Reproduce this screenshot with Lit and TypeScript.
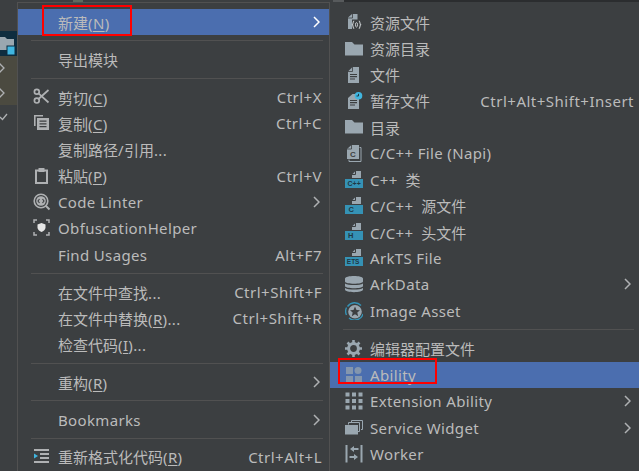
import { LitElement, html, css, svg } from "lit";
import { customElement } from "lit/decorators.js";

const G = "#9aa7b0";
const B = "#40b6e0";
const D = "#3c3f41";
const head = (body: any, bar = "#3592b5") => svg`<path fill="${G}" d="M7 7V3.500L10.500 0H16v7z"/><path stroke="${D}" d="M7 3.500h3.500V0" fill="none"/><rect y="8" width="18" height="9" fill="${bar}"/>${body}`;
const lbl = (x: number, s: string, fs = 7.5) => svg`<text x="${x}" y="15.300" font-size="${fs}" font-weight="700" font-family="Liberation Sans" fill="#1f3844">${s}</text>`;
const I: Record<string, any> = {
  cut: svg`<g fill="none" stroke="#afb1b3" stroke-width="1.700"><circle cx="3.800" cy="3.800" r="2.400"/><circle cx="3.800" cy="12.600" r="2.400"/><path d="M5.500 5.300 15.500 14.500M5.500 11 15.500 2"/></g>`,
  copy: svg`<path fill="#afb1b3" d="M1 1h9v1.600H2.600V12H1z"/><path fill="#afb1b3" fill-rule="evenodd" d="M4 4h12v12H4zm2.500 2.500v1.300h7V6.500zm0 2.800v1.300h7V9.300zm0 2.700v1.300h7V12z"/>`,
  paste: svg`<path fill="none" stroke="#afb1b3" stroke-width="2" d="M3 3.500h11V16H3z"/><path fill="#afb1b3" d="M5.500 1h6v4h-6z"/>`,
  linter: svg`<circle cx="8" cy="8" r="6.800" fill="none" stroke="#afb1b3" stroke-width="1.600"/><path d="m12.500 12.500 4 4" stroke="#afb1b3" stroke-width="2"/><circle cx="8" cy="8" r="4.800" fill="#afb1b3"/><path d="M6.500 6 5 8l1.500 2M9.500 6 11 8l-1.500 2" fill="none" stroke="${D}" stroke-width="1.100"/>`,
  shield: svg`<path fill="none" stroke="#afb1b3" stroke-width="1.500" d="M1 4V1h3M13 1h3v3M16 13v3h-3M4 16H1v-3"/><path fill="#e6e6e6" d="M8.500 4 12.500 5.500v3c0 2-2 3.500-4 4.500-2-1-4-2.500-4-4.500v-3z"/>`,
  fmt: svg`<path fill="#afb1b3" d="M1 1h15v2H1zM7 5h9v2H7zM7 9h9v2H7zM1 13h15v2H1z"/><path fill="${B}" d="M1 5.500 5 8l-4 2.500z"/>`,
  res: svg`<path fill="${G}" d="M3 9.500V4.500L7 1h5.500v5.500H7V16H3z"/><path stroke="${D}" fill="none" stroke-width=".8" d="M3 5h4.500V1"/><path fill="none" stroke="#c4c8ca" stroke-width="1.100" d="M9.200 8c-1.500 0-.8 3-1.800 3.800 1 .7.300 3.700 1.800 3.700M13.800 8c1.500 0 .8 3 1.800 3.800-1 .7-.3 3.700-1.800 3.700"/><ellipse cx="11.500" cy="11.800" rx="1" ry="2.300" fill="none" stroke="#c4c8ca"/>`,
  folder: svg`<path fill="${G}" d="M0 2h7l2.500 2.500H18V15.500H0z"/>`,
  file: svg`<path fill="${G}" d="M3 5.500 7.500 1H14v16H3z"/><path stroke="${D}" fill="none" stroke-width=".8" d="M3 5.500h4.500V1"/><path stroke="${D}" stroke-width="1.200" d="M5 8.500h7M5 10.700h7M5 13h5"/>`,
  temp: svg`<path fill="${G}" d="M3 6 7.500 2H12v4h2v11H3z"/><path stroke="${D}" stroke-width="1.200" d="M5 8.500h7M5 10.700h7M5 13h5"/><circle cx="13.500" cy="3.800" r="3.800" fill="${B}"/><path stroke="#1d3a48" d="M13.500 1.800v2.200h-2" fill="none"/>`,
  napi: svg`<path fill="none" stroke="${G}" d="M14.500 3.500h1.500v14H4V15.500"/><path fill="${G}" d="M2 5 6.500 1H14v14H2z"/><path stroke="${D}" fill="none" stroke-width=".8" d="M2 5h4.500V1"/><text x="5" y="12.500" font-size="8" font-weight="700" font-family="Liberation Sans" fill="${D}">C</text>`,
  cpp: head(lbl(2.500, "C++", 7)),
  c: head(lbl(3.500, "C")),
  h: head(lbl(3, "H")),
  ets: head(lbl(1.800, "ETS", 6.500)),
  db: svg`<path fill="${G}" d="M0 3.500C0 0 18 0 18 3.500V6.500c0 3-18 3-18 0zM0 8.500c3 2 15 2 18 0V11c0 3-18 3-18 0zM0 13c3 2 15 2 18 0v1.500c0 3.500-18 3.500-18 0z"/>`,
  img: svg`<path fill="none" stroke="#3592b5" stroke-width="1.400" d="M2.500 4.500A8.700 8.700 0 0 1 16 3.500M18 12A8.700 8.700 0 0 1 4 16M1.500 13A8.700 8.700 0 0 1 1.500 5.500"/><circle cx="10" cy="9.700" r="6.800" fill="${G}"/><path fill="${D}" d="m10 4.500 1.500 3.500 3.500.3-2.700 2.300.9 3.600-3.200-2-3.200 2 .9-3.600L5 8.300 8.500 8z"/>`,
  gear: svg`<circle cx="8.500" cy="8.500" r="4.900" fill="none" stroke="${G}" stroke-width="3"/><path stroke="${G}" stroke-width="2.600" d="M8.500 0v3M8.500 14v3M0 8.500h3M14 8.500h3M2.500 2.500l2 2M12.500 12.500l2 2M14.500 2.500l-2 2M4.500 12.500l-2 2"/>`,
  ability: svg`<g fill="#8496ae"><rect x="1" y="1" width="7" height="7"/><circle cx="13" cy="4.500" r="3.500"/><rect x="1" y="10" width="7" height="6"/><rect x="10" y="10" width="7" height="6"/></g>`,
  ext: svg`<g fill="${G}"><rect x="0.500" y="0.500" width="4" height="4"/><rect x="7" y="0.500" width="4" height="4"/><rect x="13.500" y="0.500" width="4" height="4"/><rect x="0.500" y="7" width="4" height="4"/><rect x="7" y="7" width="4" height="4"/><rect x="13.500" y="7" width="4" height="4"/><rect x="0.500" y="13.500" width="4" height="4"/><rect x="7" y="13.500" width="4" height="4"/><rect x="13.500" y="13.500" width="4" height="4"/></g>`,
  widget: svg`<path fill="none" stroke="${G}" d="M6.500 3.500V1.500h11v9H16"/><path fill="none" stroke="${G}" d="M3.500 5.500V3.500h11v9H13"/><rect x="0" y="6" width="13" height="9.500" fill="${G}"/>`,
  worker: svg`<path fill="${G}" d="M0.500 0h2v17.500h-2zM15.500 0h2v17.500h-2z"/><path fill="${G}" d="M9 3h4.500v2H9zM9 1 5 4l4 3zM4.500 11H9v2H4.500zM9 9l4 3-4 3z"/>`,
};

type Item = { sep?: boolean; t?: string; k?: string; i?: string; a?: boolean; hi?: boolean };

/* "_N" marks an underlined mnemonic; Latin runs get their own spacing class. */
const text = (s: string) =>
  s.split(/(_[A-Z]|[\u4e00-\u9fff]+)/).filter(Boolean).map((p, n, all) => {
    if (p[0] === "_") return html`<u class="en">${p[1]}</u>`;
    if (/[\u4e00-\u9fff]/.test(p))
      return html`<span class="${n > 0 && all[n - 1].endsWith(" ") ? "gap" : ""}">${p}</span>`;
    return html`<span class="en">${p}</span>`;
  });

const LEFT: Item[] = [
  { t: "新建(_N)", a: true, hi: true },
  { sep: true },
  { t: "导出模块" },
  { sep: true },
  { t: "剪切(_C)", i: "cut", k: "Ctrl+X" },
  { t: "复制(_C)", i: "copy", k: "Ctrl+C" },
  { t: "复制路径/引用..." },
  { t: "粘贴(_P)", i: "paste", k: "Ctrl+V" },
  { t: "Code Linter", i: "linter", a: true },
  { t: "ObfuscationHelper", i: "shield" },
  { t: "Find Usages", k: "Alt+F7" },
  { sep: true },
  { t: "在文件中查找...", k: "Ctrl+Shift+F" },
  { t: "在文件中替换(_R)...", k: "Ctrl+Shift+R" },
  { t: "检查代码(_I)..." },
  { sep: true },
  { t: "重构(_R)", a: true },
  { sep: true },
  { t: "Bookmarks", a: true },
  { sep: true },
  { t: "重新格式化代码(_R)", i: "fmt", k: "Ctrl+Alt+L" },
];

const RIGHT: Item[] = [
  { t: "资源文件", i: "res" },
  { t: "资源目录", i: "folder" },
  { t: "文件", i: "file" },
  { t: "暂存文件", i: "temp", k: "Ctrl+Alt+Shift+Insert" },
  { t: "目录", i: "folder" },
  { t: "C/C++ File (Napi)", i: "napi" },
  { t: "C++ 类", i: "cpp" },
  { t: "C/C++ 源文件", i: "c" },
  { t: "C/C++ 头文件", i: "h" },
  { t: "ArkTS File", i: "ets" },
  { t: "ArkData", i: "db", a: true },
  { t: "Image Asset", i: "img" },
  { sep: true },
  { t: "编辑器配置文件", i: "gear" },
  { t: "Ability", i: "ability", hi: true },
  { t: "Extension Ability", i: "ext", a: true },
  { t: "Service Widget", i: "widget", a: true },
  { t: "Worker", i: "worker" },
];

@customElement("app-root")
export class AppRoot extends LitElement {
  static styles = css`
    :host {
      display: block;
      width: 639px;
      height: 471px;
      overflow: hidden;
      background: #3c3f41;
      font-family: "Noto Sans", "Noto Sans CJK SC", sans-serif;
      font-size: 15px;
      color: #bbbbbb;
    }
    .page { position: relative; display: grid; grid-template-columns: 17px 313px 309px; height: 471px; }
    .strip { display: flex; flex-direction: column; padding-top: 31px; overflow: hidden; }
    .sel { height: 25px; flex: none; background: #0f2d3f; }
    .warn { height: 24.500px; flex: none; background: #4b4a40; display: flex; align-items: center; }
    .chk { height: 24px; flex: none; display: flex; align-items: center; }
    .sel svg, .warn svg, .chk svg { display: block; }
    .menu { display: flex; flex-direction: column; min-width: 0; }
    .left { position: relative; border: solid #515151; border-width: 1px 1px 0; margin-top: 2px; padding-top: 6px; }
    .left .row { height: 26.280px; padding: 0 7px 0 15px; }
    .left .row .ar { margin-right: 2px; }
    .left .sep { height: 11.200px; padding: 0 6px 0 13px; }
    .right { position: relative; padding-top: 9.200px; }
    .right .row { height: 26.220px; padding: 0 5px 0 15px; }
    .right .sep { height: 12px; padding: 0 5px 0 13px; }
    .top { position: absolute; left: 14px; right: 0; top: 0; height: 2px; background: #2b2d2f; }
    .top2 { position: absolute; left: 3px; width: 11px; top: 0; height: 2px; background: #575a5c; }
    .tab { position: absolute; left: 55px; top: -3px; width: 10px; height: 2px; background: #5d6b5e; }
    .row { display: flex; align-items: center; flex: none; box-sizing: border-box; white-space: nowrap; }
    .row.hi { background: #4b6eaf; }
    .ic { width: 18px; height: 18px; flex: none; display: block; }
    .slot { width: 25px; flex: none; display: flex; }
    .t { flex: 1; }
    .en { letter-spacing: 0.35px; }
    .k { letter-spacing: 0.5px; }
    .gap { margin-left: 3.500px; }
    u { text-underline-offset: 2px; }
    .ar { width: 7px; height: 12px; margin-right: 3px; flex: none; }
    .left .hi .ar path { stroke: #ffffff; }
    .sep { flex: none; display: flex; align-items: center; }
    .sep i { display: block; height: 1px; flex: 1; background: #515151; }
    .mark { position: absolute; border: 2px solid #ff0000; box-sizing: border-box; }
    .m1 { left: 42px; top: 5px; width: 90px; height: 31px; }
    .m2 { left: 338px; top: 358px; width: 99px; height: 26px; }
  `;

  private row(it: Item) {
    if (it.sep) return html`<div class="sep"><i></i></div>`;
    return html`<div class="row ${it.hi ? "hi" : ""}">
      <span class="slot">${it.i ? html`<svg class="ic" viewBox="0 0 18 18">${I[it.i]}</svg>` : ""}</span>
      <span class="t">${text(it.t!)}</span>
      ${it.k ? html`<span class="k">${it.k}</span>` : ""}
      ${it.a
        ? html`<svg class="ar" viewBox="0 0 7 12"><path d="M1 1l5 5-5 5" fill="none" stroke="#afb1b3" stroke-width="1.500"/></svg>`
        : ""}
    </div>`;
  }

  render() {
    return html`<div class="page">
      <div class="strip">
        <div class="sel">
          <svg width="17" height="25" viewBox="0 0 17 25">
            <path fill="#9aa7b0" d="M0 6h5l2 2h7v11H0z"/>
            <rect x="7" y="15" width="8" height="9" fill="#40b6e0" stroke="#0f2d3f"/>
          </svg>
        </div>
        <div class="warn"><svg width="6" height="12" viewBox="0 0 6 12"><path d="M-1 1l5 5-5 5" fill="none" stroke="#afb1b3" stroke-width="1.300"/></svg></div>
        <div class="warn"><svg width="6" height="12" viewBox="0 0 6 12"><path d="M-1 1l5 5-5 5" fill="none" stroke="#afb1b3" stroke-width="1.300"/></svg></div>
        <div class="chk"><svg width="8" height="10" viewBox="0 0 8 10"><path d="M0 5l2.500 2.500L7 2" fill="none" stroke="#afb1b3" stroke-width="1.300"/></svg></div>
      </div>
      <div class="menu left"><div class="tab"></div>${LEFT.map((i) => this.row(i))}</div>
      <div class="menu right"><div class="top2"></div><div class="top"></div>${RIGHT.map((i) => this.row(i))}</div>
      <div class="mark m1"></div>
      <div class="mark m2"></div>
    </div>`;
  }
}
